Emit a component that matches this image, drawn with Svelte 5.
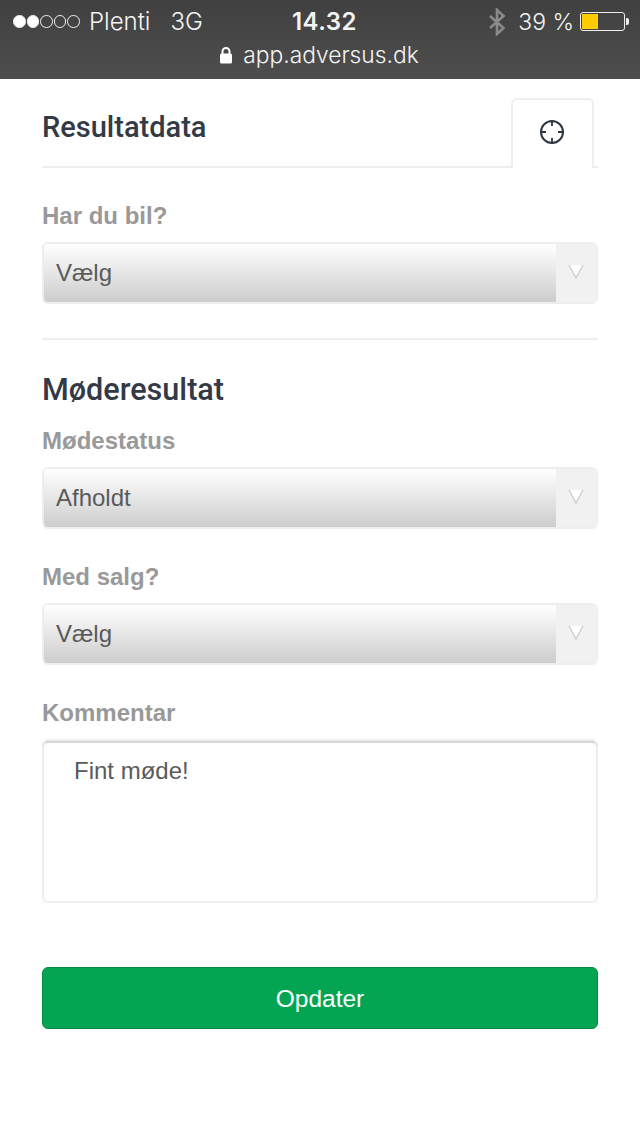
<script>
  const fields = [
    { label: "Mødestatus", value: "Afholdt" },
    { label: "Med salg?", value: "Vælg" }
  ];
</script>

<div class="status">
  <div class="status-top">
    <div class="carrier">
      <span class="dots">
        <i class="on"></i><i class="on"></i><i></i><i></i><i></i>
      </span>
      <span class="name">Plenti</span>
      <span class="net">3G</span>
    </div>
    <div class="clock">14.32</div>
    <div class="right">
      <svg class="bt" width="18" height="28" viewBox="0 0 18 28">
        <path d="M2 8 L15.5 20 L9 26 L9 2 L15.5 8 L2 20" fill="none" stroke="#8a8a8a" stroke-width="2.6" />
      </svg>
      <span class="pct">39 %</span>
      <div class="battery"><div class="level"></div></div>
      <div class="nub"></div>
    </div>
  </div>
  <div class="url">
    <svg width="14" height="18" viewBox="0 0 14 18">
      <path d="M3.5 8 V5.5 a3.5 3.5 0 0 1 7 0 V8" fill="none" stroke="#fff" stroke-width="2" />
      <rect x="1" y="7.5" width="12" height="10" rx="1.5" fill="#fff" />
    </svg>
    <span>app.adversus.dk</span>
  </div>
</div>

<main>
  <div class="head">
    <h2>Resultatdata</h2>
    <div class="tab">
      <svg width="26" height="26" viewBox="0 0 26 26" fill="none" stroke="#2f3744" stroke-width="2">
        <circle cx="13" cy="13" r="11" />
        <path d="M13 1 V7 M13 19 V25 M1 13 H7 M19 13 H25" stroke-width="1.8" />
      </svg>
    </div>
  </div>

  <label class="first">Har du bil?</label>
  <div class="select">
    <div class="val">Vælg</div>
    <div class="arrow">
      <svg width="16" height="15" viewBox="0 0 16 15">
        <path d="M1 1 L8 14 L15 1" fill="#fff" stroke="#c8c8c8" stroke-width="1.2" />
      </svg>
    </div>
  </div>

  <hr />

  <h2 class="sub">Møderesultat</h2>

  {#each fields as f}
    <label>{f.label}</label>
    <div class="select">
      <div class="val">{f.value}</div>
      <div class="arrow">
        <svg width="16" height="15" viewBox="0 0 16 15">
          <path d="M1 1 L8 14 L15 1" fill="#fff" stroke="#c8c8c8" stroke-width="1.2" />
        </svg>
      </div>
    </div>
  {/each}

  <label>Kommentar</label>
  <div class="area">Fint møde!</div>

  <button>Opdater</button>
</main>

<style>
  :global(body) {
    background: #fff;
    font-family: "Liberation Sans", Arial, sans-serif;
  }

  .status {
    height: 79px;
    background: linear-gradient(#404040, #4e4e4e);
    color: #f4f4f4;
    font-family: Inter, "Liberation Sans", sans-serif;
    box-sizing: border-box;
    padding: 0 11px 0 13px;
  }

  .status-top {
    height: 43px;
    display: grid;
    grid-template-columns: 1fr auto 1fr;
    align-items: center;
  }

  .carrier {
    display: flex;
    align-items: center;
    font-size: 24px;
    font-weight: 300;
  }

  .dots {
    display: flex;
    gap: 1px;
    margin-right: 9px;
  }

  .dots i {
    width: 12.6px;
    height: 12.6px;
    box-sizing: border-box;
    border: 1px solid #eee;
    border-radius: 50%;
  }

  .dots i.on {
    background: #fff;
  }

  .net {
    margin-left: 20px;
  }

  .clock {
    font-size: 24px;
    font-weight: 600;
    letter-spacing: 0.5px;
    padding-left: 7px;
  }

  .right {
    display: flex;
    align-items: center;
    justify-content: flex-end;
    font-size: 23px;
    font-weight: 300;
  }

  .bt {
    margin-right: 12px;
  }

  .pct {
    margin-right: 6px;
  }

  .battery {
    width: 45px;
    height: 19px;
    border: 1px solid #eee;
    border-radius: 3px;
    box-sizing: border-box;
    padding: 1px;
  }

  .level {
    width: 16px;
    height: 100%;
    background: #fc0;
  }

  .nub {
    width: 3px;
    height: 7px;
    background: #eee;
    margin-left: 1px;
    border-radius: 0 2px 2px 0;
  }

  .url {
    display: flex;
    align-items: center;
    justify-content: center;
    gap: 10px;
    margin-top: -2px;
    padding-right: 4px;
    font-size: 22.8px;
    font-weight: 300;
    color: #f4f4f4;
  }

  main {
    padding: 0 42px;
  }

  .head {
    display: flex;
    justify-content: space-between;
    align-items: flex-start;
    height: 89px;
    border-bottom: 2px solid #eee;
    padding-top: 19px;
    box-sizing: border-box;
  }

  h2 {
    margin: 0;
    font-family: Roboto, "Liberation Sans", sans-serif;
    font-weight: 500;
    font-size: 29px;
    line-height: 58px;
    color: #333a46;
  }

  .tab {
    width: 83px;
    height: 70px;
    margin-right: 4px;
    box-sizing: border-box;
    border: 2px solid #eee;
    border-bottom: none;
    border-radius: 6px 6px 0 0;
    background: #fff;
    display: flex;
    justify-content: center;
    padding: 19px 2px 0 0;
  }

  label {
    display: block;
    font-size: 24px;
    font-weight: 700;
    line-height: 28px;
    color: #999;
    margin: 34px 0 12px;
  }

  .select {
    height: 62px;
    box-sizing: border-box;
    display: flex;
    border: 2px solid #eee;
    border-radius: 6px;
    overflow: hidden;
  }

  .val {
    flex: 1;
    background: linear-gradient(#fff, #cdcdcd);
    font-size: 24px;
    line-height: 57px;
    color: #5a5a5a;
    padding-left: 12px;
  }

  .arrow {
    width: 40px;
    background: #f1f1f1;
    display: flex;
    align-items: center;
    justify-content: center;
    padding-bottom: 4px;
    box-sizing: border-box;
  }

  hr {
    border: none;
    height: 2px;
    background: #eee;
    margin: 34px 0 0;
  }

  .sub {
    margin-top: 22px;
    font-size: 30.6px;
    line-height: 56px;
  }

  .sub + label {
    margin-top: 9px;
  }

  .area {
    height: 164px;
    box-sizing: border-box;
    border: 2px solid #eee;
    border-radius: 6px;
    box-shadow: inset 0 2px 1px #d5d5d5;
    padding: 14px 30px;
    font-size: 24px;
    line-height: 32px;
    color: #5a5a5a;
  }

  button {
    display: block;
    width: 100%;
    height: 62px;
    margin-top: 64px;
    padding-top: 3px;
    background: #03a552;
    border: 1px solid #058a46;
    border-radius: 6px;
    color: #fff;
    font-family: "Liberation Sans", Arial, sans-serif;
    font-size: 24.5px;
  }
</style>
